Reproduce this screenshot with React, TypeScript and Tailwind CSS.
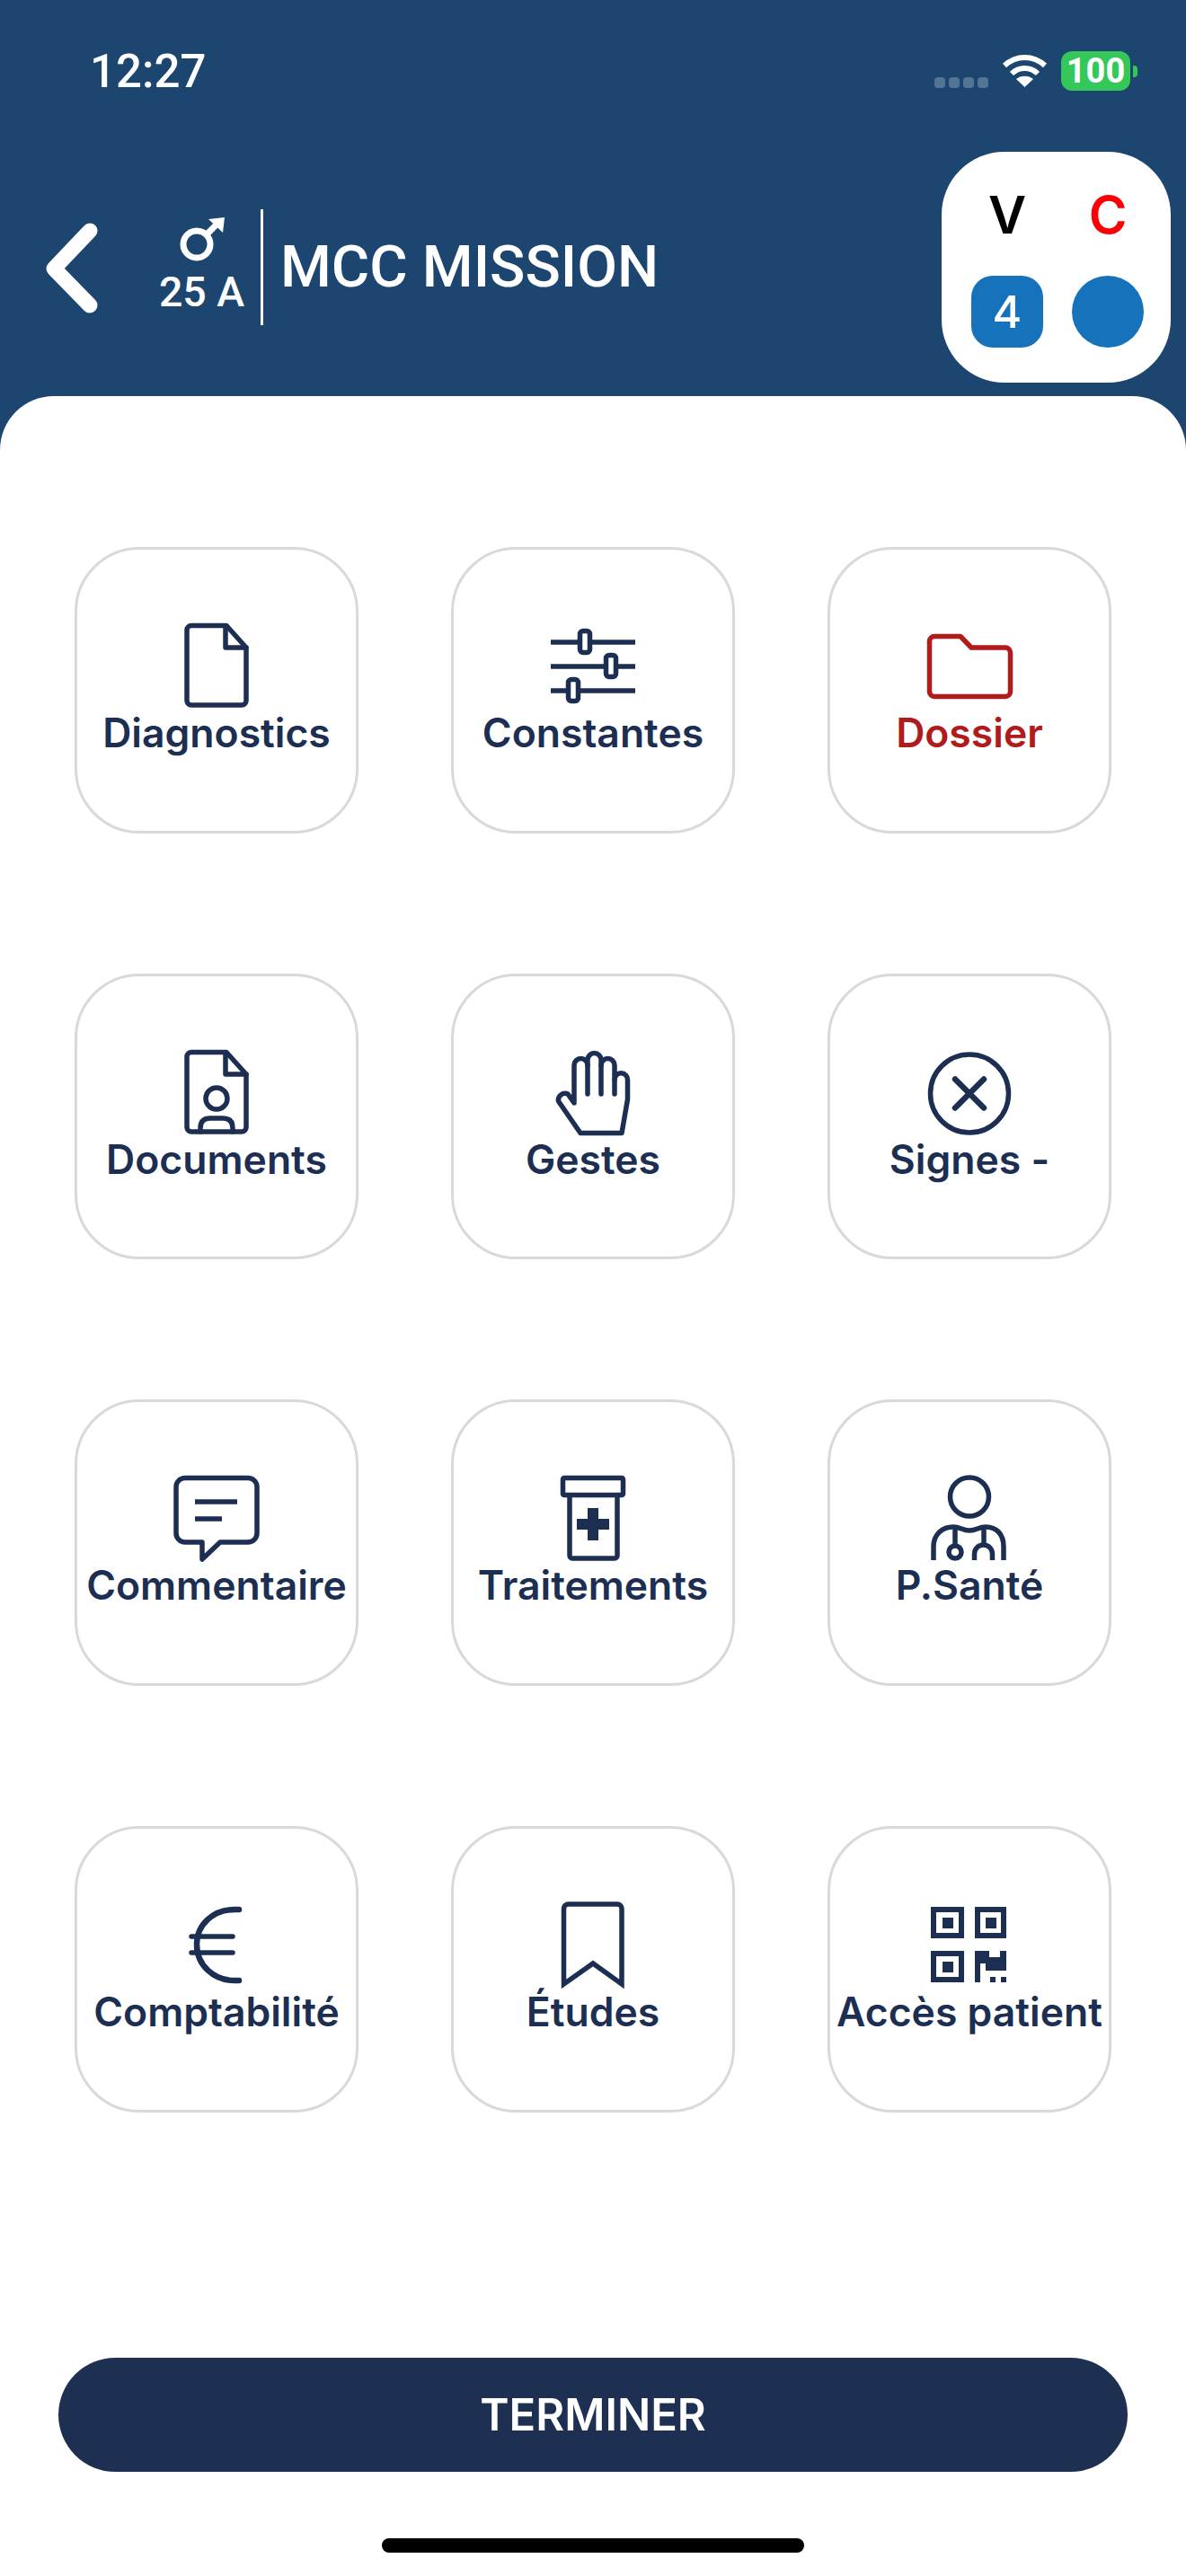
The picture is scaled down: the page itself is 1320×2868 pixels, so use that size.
import React from 'react';

const NAVY = '#1c2f52';

const Icon: React.FC<{ color?: string; children: React.ReactNode }> = ({ color = NAVY, children }) => (
  <svg
    viewBox="0 0 120 96"
    fill="none"
    stroke={color}
    strokeWidth={5.5}
    strokeLinecap="round"
    strokeLinejoin="round"
    className="w-[120px] h-[96px] overflow-visible"
  >
    {children}
  </svg>
);

const FILE_OUTLINE = 'M33 3.5H71L93 28V87a5 5 0 0 1-5 5H32a5 5 0 0 1-5-5V8.5a5 5 0 0 1 5-5Z';

const items: { label: string; red?: boolean; icon: React.ReactNode }[] = [
  {
    label: 'Diagnostics',
    icon: (
      <Icon>
        <path d={FILE_OUTLINE} />
        <path d="M70 4V28H93" />
      </Icon>
    ),
  },
  {
    label: 'Constantes',
    icon: (
      <Icon>
        <path d="M13 22H107M13 49H107M13 76H107" strokeLinecap="butt" />
        <rect x="45.5" y="9.5" width="11" height="24" rx="3.5" fill="#fff" />
        <rect x="74.5" y="36.5" width="11" height="24" rx="3.5" fill="#fff" />
        <rect x="32.5" y="63.5" width="11" height="24" rx="3.5" fill="#fff" />
      </Icon>
    ),
  },
  {
    label: 'Dossier',
    red: true,
    icon: (
      <Icon color="#b01c1c">
        <path d="M21 15.5H50L62 28H100a5.5 5.5 0 0 1 5.5 5.5V77a5.5 5.5 0 0 1-5.5 5.5H21a5.5 5.5 0 0 1-5.5-5.5V21a5.5 5.5 0 0 1 5.5-5.5Z" />
      </Icon>
    ),
  },
  {
    label: 'Documents',
    icon: (
      <Icon>
        <path d={FILE_OUTLINE} />
        <path d="M70 4V28H93" />
        <ellipse cx="60" cy="55" rx="12" ry="12" />
        <path d="M42 92V88Q42 77 53 77H67Q78 77 78 88V92" />
      </Icon>
    ),
  },
  {
    label: 'Gestes',
    icon: (
      <Icon>
        <path d="M46 93.5H92L98.5 56V34A7.25 7.25 0 0 0 84 34V18A7.5 7.5 0 0 0 69 18V12A7.5 7.5 0 0 0 54 12V18A7.5 7.5 0 0 0 39 18V60L32 50A7.5 7.5 0 0 0 21.5 58Z" />
        <path d="M84 34V50M69 18V50M54 18V50" />
      </Icon>
    ),
  },
  {
    label: 'Signes -',
    icon: (
      <Icon>
        <circle cx="60" cy="49.5" r="43.5" />
        <path d="M44 33.5L76 65.5M76 33.5L44 65.5" strokeWidth={6.5} />
      </Icon>
    ),
  },
  {
    label: 'Commentaire',
    icon: (
      <Icon>
        <path d="M25 3.5H95a10 10 0 0 1 10 10V65a10 10 0 0 1-10 10H64L44 94V75H25a10 10 0 0 1-10-10V13.5a10 10 0 0 1 10-10Z" />
        <path d="M36 30H83M36 49H66" strokeLinecap="butt" />
      </Icon>
    ),
  },
  {
    label: 'Traitements',
    icon: (
      <Icon>
        <rect x="26.5" y="3.5" width="67" height="19" rx="1.5" />
        <path d="M34 23V90a3 3 0 0 0 3 3H84a3 3 0 0 0 3-3V23" />
        <path d="M54 37H66V49H78V61H66V73H54V61H42V49H54Z" fill={NAVY} stroke="none" />
      </Icon>
    ),
  },
  {
    label: 'P.Santé',
    icon: (
      <Icon>
        <circle cx="60" cy="24.5" r="21.5" />
        <path
          d="M20 95V80C20 66 30 58 42 58C50 58 52 62 60 62C68 62 70 58 78 58C90 58 98 66 98 80V95"
          strokeLinecap="butt"
        />
        <path d="M44 60V79M76 60V78" strokeLinecap="butt" />
        <circle cx="44" cy="86" r="7" />
        <path d="M65.5 95V88a10 10 0 0 1 20 0V95" strokeLinecap="butt" />
      </Icon>
    ),
  },
  {
    label: 'Comptabilité',
    icon: (
      <Icon>
        <path d="M85 9H80C57 9 38 25 38 48C38 71 57 88 80 88H85" strokeWidth={6.5} />
        <path d="M32 39H78M32 57H78" />
      </Icon>
    ),
  },
  {
    label: 'Études',
    icon: (
      <Icon>
        <path d="M27.5 92V8a5 5 0 0 1 5-5H87a5 5 0 0 1 5 5V92L60 69Z" strokeLinejoin="miter" />
      </Icon>
    ),
  },
  {
    label: 'Accès patient',
    icon: (
      <Icon>
        <g strokeLinejoin="miter" strokeWidth={6}>
          <rect x="20" y="9" width="31" height="29" />
          <rect x="69" y="9" width="29" height="29" />
          <rect x="20" y="58" width="31" height="29" />
        </g>
        <g fill={NAVY} stroke="none">
          <rect x="30" y="18" width="12" height="12" />
          <rect x="78" y="18" width="12" height="12" />
          <rect x="30" y="67" width="12" height="12" />
          <path d="M66 55H82V62H94V55H101V77H78V69H72V90H66Z" />
          <rect x="83" y="84" width="6" height="6" />
          <rect x="95" y="84" width="6" height="6" />
        </g>
      </Icon>
    ),
  },
];

const App: React.FC = () => {
  return (
    <div className="w-[1320px] h-[2868px] bg-[#1c466f] flex flex-col overflow-hidden font-['Inter',sans-serif]">
      {/* Status bar */}
      <div className="h-[169px] shrink-0 flex justify-between items-start pl-[100px] pr-[54px] pt-[58px] text-white">
        <span className="font-['Roboto',sans-serif] font-medium text-[51px] leading-[44px]">12:27</span>
        <div className="flex items-start -mt-[1px]">
          <div className="flex gap-[4px] mt-[29px] mr-[15px]">
            <span className="w-[12px] h-[12px] rounded-[4px] bg-white/25" />
            <span className="w-[12px] h-[12px] rounded-[4px] bg-white/25" />
            <span className="w-[12px] h-[12px] rounded-[4px] bg-white/25" />
            <span className="w-[12px] h-[12px] rounded-[4px] bg-white/25" />
          </div>
          <svg viewBox="0 0 51 38" className="w-[51px] h-[38px] mt-[3px] mr-[15px]" fill="none" stroke="#fff" strokeWidth={6}>
            <path d="M3 13C16 1 35 1 48 13" />
            <path d="M11 22C19 14 32 14 40 22" />
            <path d="M25.5 37L16 28C21 23.5 30 23.5 35 28Z" fill="#fff" stroke="none" />
          </svg>
          <div className="w-[77px] h-[44px] rounded-[12px] bg-[#34c759] flex items-center justify-center font-['Roboto',sans-serif] font-bold text-[38px] leading-none">
            100
          </div>
          <span className="w-[5px] h-[13px] mt-[16px] ml-[3px] rounded-r-[4px] bg-[#34c759]" />
        </div>
      </div>

      {/* Header */}
      <header className="h-[272px] shrink-0 flex items-center justify-between pb-[15px] pl-[46px] pr-[17px] text-white">
        <div className="flex items-center">
          <svg viewBox="0 0 68 110" className="w-[68px] h-[110px]" fill="none" stroke="#fff" strokeWidth={17} strokeLinecap="round" strokeLinejoin="round">
            <path d="M54 14L14 56L54 97" />
          </svg>
          <div className="ml-[63px] w-[95px] pb-[4px] flex flex-col items-center">
            <svg viewBox="0 0 50 50" className="w-[50px] h-[50px]" fill="none" stroke="#fff" strokeWidth={7}>
              <circle cx="19" cy="30" r="15" />
              <path d="M29 20L44 5" />
              <path d="M32 2L50 0L48 17Z" fill="#fff" stroke="none" />
            </svg>
            <span className="mt-[9px] font-['Roboto',sans-serif] font-medium text-[46.5px] leading-[48px] whitespace-nowrap">25 A</span>
          </div>
          <div className="ml-[18px] w-[3px] h-[129px] bg-white" />
          <h1 className="ml-[19px] font-['Roboto',sans-serif] font-medium text-[65px] leading-none whitespace-nowrap">MCC MISSION</h1>
        </div>
        <div className="w-[255px] h-[257px] bg-white rounded-[70px] pt-[38px] pl-[33px] grid grid-cols-[80px_80px] gap-x-[32px] grid-rows-[64px_80px] gap-y-[36px]">
          <span className="text-black font-semibold text-[58px] leading-[64px] text-center">V</span>
          <span className="text-[#fb0007] font-semibold text-[58px] leading-[64px] text-center">C</span>
          <span className="bg-[#1672bb] rounded-[24px] flex items-center justify-center text-white font-medium text-[50px] leading-none">4</span>
          <span className="bg-[#1672bb] rounded-full" />
        </div>
      </header>

      {/* Menu panel */}
      <main className="flex-1 flex flex-col bg-white rounded-t-[60px]">
        <div className="pt-[168px] px-[83px] grid grid-cols-[316px_316px_316px] gap-x-[103px] gap-y-[156px]">
          {items.map(item => (
            <button
              key={item.label}
              className="h-[318.7px] border-[3px] border-[#d9d9d9] rounded-[72px] bg-white flex flex-col items-center justify-start pt-[81px]"
            >
              {item.icon}
              <span
                className={`mt-[1px] text-[44.5px] leading-[52px] font-semibold whitespace-nowrap ${
                  item.red ? 'text-[#b01c1c]' : 'text-[#1c2f52]'
                }`}
              >
                {item.label}
              </span>
            </button>
          ))}
        </div>

        <div className="mt-auto flex flex-col items-center pb-[26px]">
          <button className="w-[1190px] h-[127px] rounded-full bg-[#1e3052] text-white text-[49px] font-semibold">
            TERMINER
          </button>
          <div className="mt-[74px] w-[470px] h-[16px] rounded-full bg-black" />
        </div>
      </main>
    </div>
  );
};

export default App;
